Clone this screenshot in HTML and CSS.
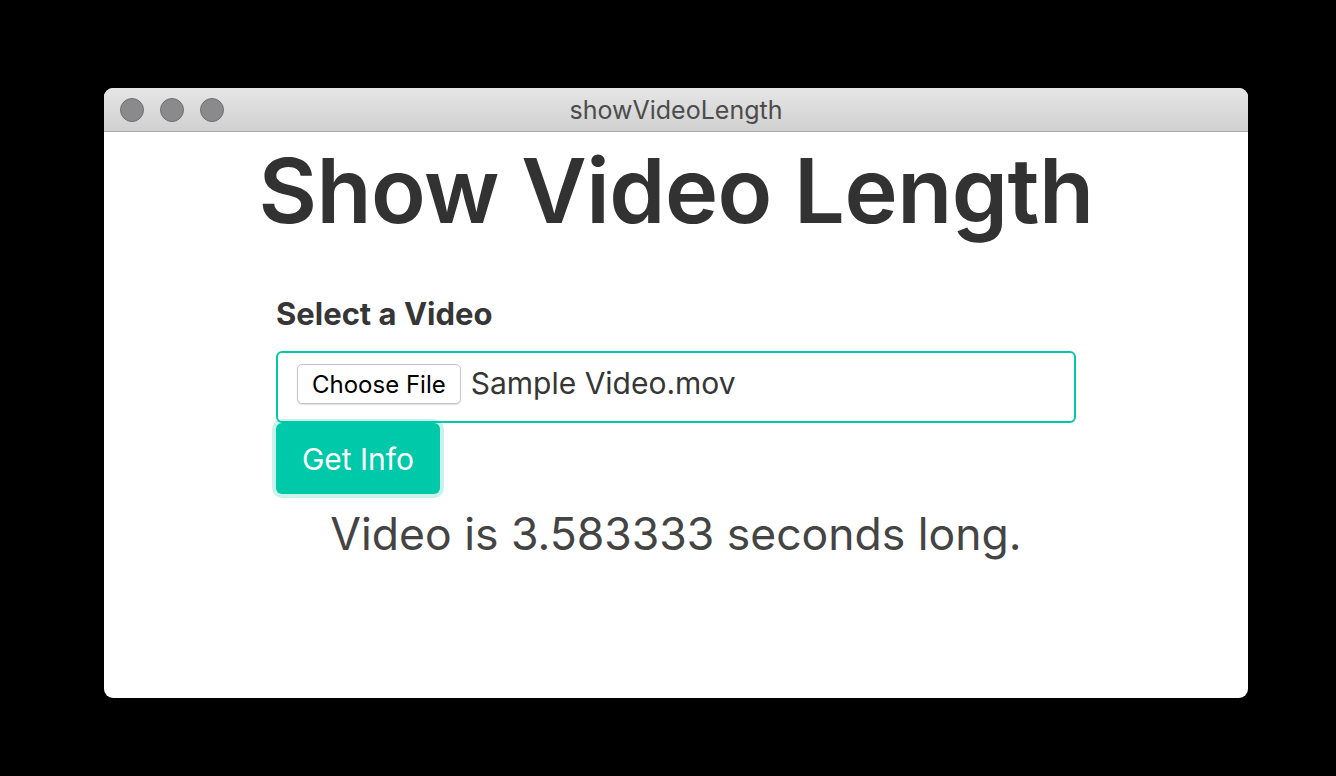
FILE: index.html
```html
<!DOCTYPE html>
<html>
<head>
<meta charset="utf-8">
<link rel="stylesheet" href="styles.css">
</head>
<body>
<div class="window">
  <div class="titlebar">
    <div class="lights">
      <span class="light"></span><span class="light"></span><span class="light"></span>
    </div>
    <div class="title">showVideoLength</div>
  </div>
  <div class="content">
    <h1 class="heading">Show Video Length</h1>
    <div class="form">
      <label class="label">Select a Video</label>
      <div class="file-box">
        <span class="choose">Choose File</span>
        <span class="filename">Sample Video.mov</span>
      </div>
      <button class="get-info">Get Info</button>
      <p class="result">Video is 3.583333 seconds long.</p>
    </div>
  </div>
</div>
</body>
</html>
```
FILE: styles.css
```css
html, body {
  margin: 0;
  padding: 0;
  background: #000;
  height: 100%;
}
body {
  display: flex;
  justify-content: flex-start;
  padding: 88px 0 0 104px;
  box-sizing: border-box;
  font-family: Inter, "Noto Sans", sans-serif;
}
.window {
  width: 1144px;
  height: 610px;
  background: #fff;
  border-radius: 9px;
  overflow: hidden;
  display: flex;
  flex-direction: column;
}
.titlebar {
  height: 43px;
  flex: none;
  background: linear-gradient(#e6e6e6, #d0d0d0);
  border-bottom: 1px solid #a9a9a9;
  position: relative;
  display: flex;
  align-items: center;
  justify-content: center;
}
.lights {
  position: absolute;
  left: 16px;
  top: 10px;
  display: flex;
  gap: 16px;
}
.light {
  width: 22px;
  height: 22px;
  border-radius: 50%;
  background: #8a898c;
  border: 1px solid #6f6e72;
}
.title {
  font-size: 25px;
  color: #4c4c4c;
}
.content {
  flex: 1;
  display: flex;
  flex-direction: column;
  align-items: center;
}
.heading {
  margin: 6px 0 0;
  font-size: 90px;
  font-weight: 600;
  color: #323232;
  line-height: 106px;
  letter-spacing: -0.5px;
}
.form {
  width: 800px;
  margin-top: 51px;
  display: flex;
  flex-direction: column;
  align-items: flex-start;
}
.label {
  font-size: 31px;
  font-weight: 700;
  color: #363636;
  line-height: 38px;
}
.file-box {
  margin-top: 18px;
  width: 100%;
  box-sizing: border-box;
  height: 72px;
  border: 2px solid #00c9a9;
  border-radius: 6px;
  display: flex;
  align-items: flex-start;
  padding: 11px 19px;
  gap: 10px;
}
.choose {
  height: 40px;
  box-sizing: border-box;
  padding: 0 14px;
  background: #fff;
  border: 1px solid #c4c4c4;
  border-radius: 5px;
  box-shadow: 0 1px 1px rgba(0,0,0,0.12);
  font-size: 24px;
  color: #000;
  display: flex;
  align-items: center;
}
.filename {
  font-size: 30px;
  color: #363636;
  line-height: 38px;
}
.get-info {
  width: 164px;
  height: 71px;
  margin: 0;
  border: none;
  border-radius: 6px;
  background: #00c9a9;
  color: #fff;
  font-family: inherit;
  font-size: 30px;
  box-shadow: 0 0 0 4px rgba(0, 201, 169, 0.22);
}
.result {
  align-self: center;
  margin: 12px 0 0;
  font-size: 44.5px;
  color: #444;
  line-height: 56px;
}
```
